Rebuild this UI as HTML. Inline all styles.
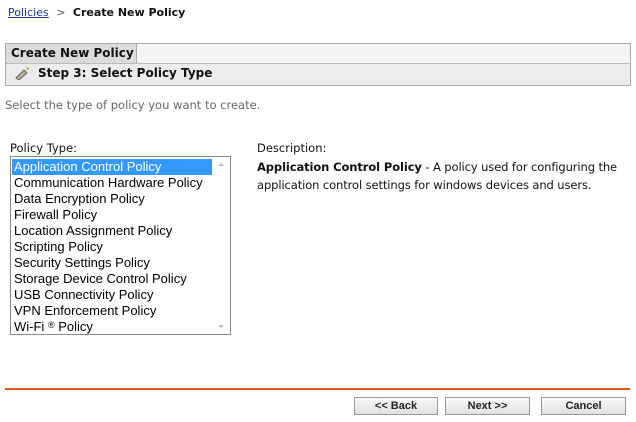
<!DOCTYPE html>
<html><head><style>
body{margin:0;width:636px;height:422px;background:#fff;font-family:"DejaVu Sans","Liberation Sans",sans-serif;font-size:11px;color:#000;position:relative;overflow:hidden}
.a{position:absolute;white-space:nowrap}
.btn{position:absolute;top:397px;height:16px;border:1px solid #999;background:linear-gradient(#fafafa,#e0e0e0);font-family:"Liberation Sans",sans-serif;font-weight:bold;font-size:11px;text-align:center;line-height:16px;color:#222}
.li{height:16px;line-height:16px;padding-left:3px;font-family:"Liberation Sans",sans-serif;font-size:13px}
</style></head><body>
<div class="a" style="left:8px;top:6px;"><span style="color:#1a3a8a;text-decoration:underline">Policies</span> <span style="color:#777;font-weight:bold;margin:0 4px">&gt;</span> <span style="font-weight:bold;color:#111">Create New Policy</span></div>
<div class="a" style="left:5px;top:43px;width:624px;height:41px;border:1px solid #aaa;background:#ececec"></div>
<div class="a" style="left:137px;top:44px;width:492px;height:19px;background:#f5f5f5"></div>
<div class="a" style="left:6px;top:44px;height:19px;background:#dcdcdc;border-right:1px solid #aaa;font-weight:bold;font-size:12px;line-height:19px;padding-left:5px;box-sizing:border-box;width:131px;color:#111">Create New Policy</div>
<div class="a" style="left:6px;top:63px;width:623px;height:1px;background:#bbb"></div>
<div class="a" style="left:14px;top:66px;width:16px;height:14px">
<svg width="16" height="14"><path d="M2 12 L10 4 L13 7 L5 14Z" fill="#b8b090" stroke="#666" stroke-width="1"/><path d="M12 1 L14 3 M15 2 L13 4" stroke="#c8a020" stroke-width="1"/></svg></div>
<div class="a" style="left:38px;top:65px;font-weight:bold;font-size:12px;line-height:16px;color:#111">Step 3: Select Policy Type</div>
<div class="a" style="left:5px;top:98px;color:#666;font-size:11.5px">Select the type of policy you want to create.</div>
<div class="a" style="left:10px;top:141px;color:#111;font-size:11.5px">Policy Type:</div>
<div class="a" style="left:10px;top:156px;width:219px;height:177px;border:1px solid #888;background:#fff;overflow:hidden">
<div style="position:absolute;right:0;top:0;width:17px;height:177px;background:#fff"><div style="position:absolute;left:5px;top:6px;border:3px solid transparent;border-bottom-color:#bbb;border-top:0"></div><div style="position:absolute;left:5px;top:168px;border:3px solid transparent;border-top-color:#bbb;border-bottom:0"></div></div>
<div style="padding-top:2px;width:201px">
<div class="li" style="background:#3399ff;color:#fff;margin-left:1px;padding-left:2px">Application Control Policy</div>
<div class="li">Communication Hardware Policy</div>
<div class="li">Data Encryption Policy</div>
<div class="li">Firewall Policy</div>
<div class="li">Location Assignment Policy</div>
<div class="li">Scripting Policy</div>
<div class="li">Security Settings Policy</div>
<div class="li">Storage Device Control Policy</div>
<div class="li">USB Connectivity Policy</div>
<div class="li">VPN Enforcement Policy</div>
<div class="li">Wi-Fi <span style="font-size:9px;vertical-align:3px;line-height:0">®</span> Policy</div>
</div></div>
<div class="a" style="left:257px;top:141px;color:#111;font-size:11.5px">Description:</div>
<div class="a" style="left:257px;top:158px;line-height:18px;color:#111;font-size:11.5px;letter-spacing:-0.1px"><b>Application Control Policy</b> - A policy used for configuring the<br>application control settings for windows devices and users.</div>
<div class="a" style="left:5px;top:388px;width:625px;height:2px;background:#e05a1e"></div>
<div class="btn" style="left:354px;width:82px">&lt;&lt; Back</div>
<div class="btn" style="left:445px;width:83px">Next &gt;&gt;</div>
<div class="btn" style="left:541px;width:83px">Cancel</div>
</body></html>
